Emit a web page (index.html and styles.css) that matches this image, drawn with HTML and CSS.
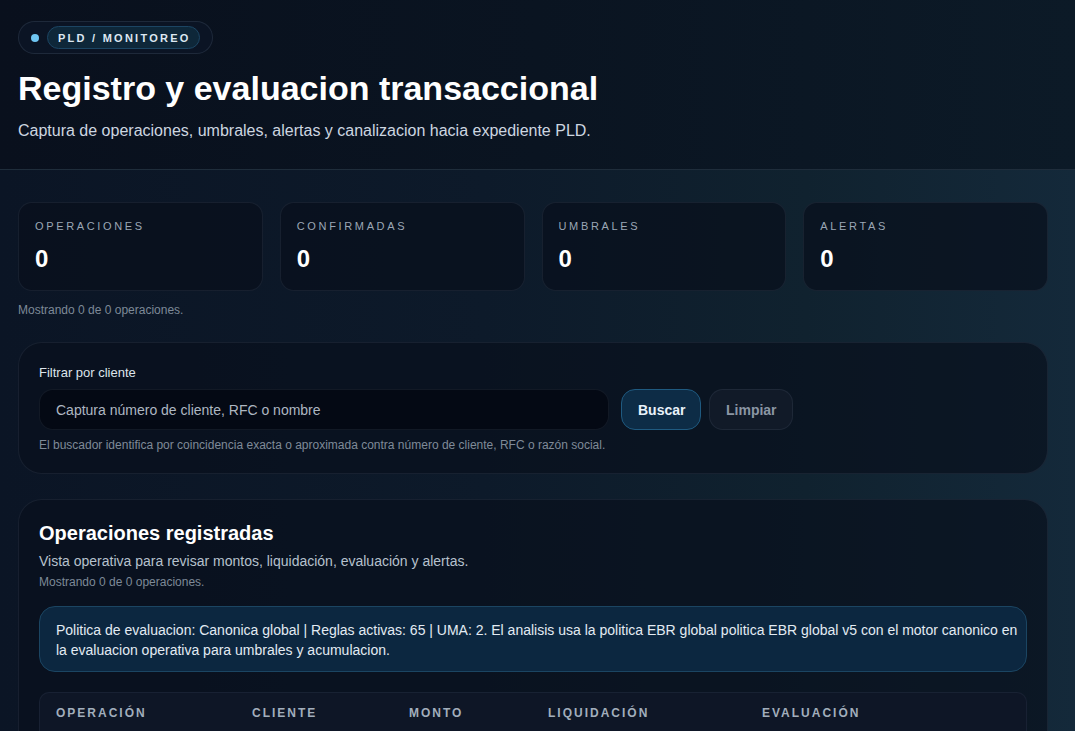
FILE: index.html
```html
<!DOCTYPE html>
<html lang="es">
<head>
<meta charset="utf-8">
<title>Registro y evaluacion transaccional</title>
<link rel="stylesheet" href="styles.css">
</head>
<body>
<header class="hero">
  <div class="hero-inner">
    <div class="chip">
      <span class="chip-dot"></span>
      <span class="chip-label">PLD / MONITOREO</span>
    </div>
    <h1 class="hero-title">Registro y evaluacion transaccional</h1>
    <p class="hero-sub">Captura de operaciones, umbrales, alertas y canalizacion hacia expediente PLD.</p>
  </div>
</header>

<main class="page">
  <section class="stats">
    <div class="stat">
      <div class="stat-label">OPERACIONES</div>
      <div class="stat-value">0</div>
    </div>
    <div class="stat">
      <div class="stat-label">CONFIRMADAS</div>
      <div class="stat-value">0</div>
    </div>
    <div class="stat">
      <div class="stat-label">UMBRALES</div>
      <div class="stat-value">0</div>
    </div>
    <div class="stat">
      <div class="stat-label">ALERTAS</div>
      <div class="stat-value">0</div>
    </div>
  </section>
  <p class="muted-note">Mostrando 0 de 0 operaciones.</p>

  <section class="panel filter">
    <label class="field-label" for="cliente">Filtrar por cliente</label>
    <div class="search-row">
      <input id="cliente" class="search-input" type="text" placeholder="Captura número de cliente, RFC o nombre">
      <div class="btn-group">
        <button class="btn btn-primary" type="button">Buscar</button>
        <button class="btn btn-ghost" type="button">Limpiar</button>
      </div>
    </div>
    <p class="help">El buscador identifica por coincidencia exacta o aproximada contra número de cliente, RFC o razón social.</p>
  </section>

  <section class="panel ops">
    <h2 class="panel-title">Operaciones registradas</h2>
    <p class="panel-sub">Vista operativa para revisar montos, liquidación, evaluación y alertas.</p>
    <p class="muted-note tight">Mostrando 0 de 0 operaciones.</p>

    <div class="policy">Politica de evaluacion: Canonica global | Reglas activas: 65 | UMA: 2. El analisis usa la politica EBR global politica EBR global v5 con el motor canonico en la evaluacion operativa para umbrales y acumulacion.</div>

    <div class="table-wrap">
      <table class="ops-table">
        <colgroup>
          <col class="c-op">
          <col class="c-cli">
          <col class="c-mon">
          <col class="c-liq">
          <col class="c-eval">
        </colgroup>
        <thead>
          <tr>
            <th>OPERACIÓN</th>
            <th>CLIENTE</th>
            <th>MONTO</th>
            <th>LIQUIDACIÓN</th>
            <th>EVALUACIÓN</th>
          </tr>
        </thead>
      </table>
    </div>
  </section>
</main>
</body>
</html>
```

FILE: styles.css
```css
* {
  box-sizing: border-box;
}

html, body {
  margin: 0;
  padding: 0;
}

body {
  font-family: "Liberation Sans", Arial, sans-serif;
  color: #e6edf4;
  background: linear-gradient(90deg, #0b1525 0%, #0d1a2a 45%, #10222f 75%, #14293a 100%);
  min-height: 100vh;
  overflow: hidden;
}

/* ---------- header ---------- */
.hero {
  background: linear-gradient(90deg, #09101d 0%, #0a1421 50%, #0c1a27 100%);
  border-bottom: 1px solid #1f2d3b;
}

.hero-inner {
  padding: 21px 27px 28px 18px;
}

.chip {
  display: inline-flex;
  align-items: center;
  gap: 8px;
  height: 33px;
  padding: 0 12px;
  border: 1px solid rgba(148, 170, 200, 0.14);
  border-radius: 999px;
  background: #0b1424;
}

.chip-dot {
  width: 8px;
  height: 8px;
  border-radius: 50%;
  background: #6fc6f2;
}

.chip-label {
  display: inline-flex;
  align-items: center;
  height: 23px;
  padding: 0 8px 0 10px;
  border: 1px solid #1c4563;
  border-radius: 999px;
  background: #0e2739;
  color: #dde8f2;
  font-size: 11px;
  font-weight: 700;
  letter-spacing: 2.25px;
}

.hero-title {
  margin: 14px 0 0;
  font-size: 34px;
  line-height: 40px;
  font-weight: 700;
  color: #ffffff;
}

.hero-sub {
  margin: 13px 0 0;
  font-size: 16px;
  line-height: 20px;
  color: #cdd6e0;
}

/* ---------- main ---------- */
.page {
  padding: 32px 27px 0 18px;
}

.stats {
  display: grid;
  grid-template-columns: repeat(4, 1fr);
  gap: 17px;
}

.stat {
  height: 89px;
  padding: 16px 16px 18px;
  border: 1px solid rgba(148, 170, 200, 0.1);
  border-radius: 14px;
  background: rgba(8, 15, 28, 0.72);
}

.stat-label {
  font-size: 11px;
  line-height: 14px;
  letter-spacing: 2.65px;
  color: #9ba7b5;
}

.stat-value {
  margin-top: 12px;
  font-size: 24px;
  line-height: 28px;
  font-weight: 700;
  color: #ffffff;
}

.muted-note {
  margin: 12px 0 0;
  font-size: 12px;
  line-height: 15px;
  color: #7d8997;
}

.muted-note.tight {
  margin-top: 5px;
}

/* ---------- panels ---------- */
.panel {
  border: 1px solid rgba(148, 170, 200, 0.1);
  border-radius: 24px;
  background: rgba(8, 15, 28, 0.7);
  padding: 22px 20px 20px;
}

.filter {
  margin-top: 24px;
}

.field-label {
  display: block;
  font-size: 13px;
  line-height: 16px;
  color: #dde4eb;
}

.search-row {
  display: flex;
  align-items: center;
  gap: 12px;
  margin-top: 8px;
}

.search-input {
  width: 570px;
  height: 41px;
  padding: 0 16px;
  border: 1px solid rgba(148, 170, 200, 0.1);
  border-radius: 14px;
  background: #040914;
  color: #e6edf4;
  font-family: "Liberation Sans", Arial, sans-serif;
  font-size: 14px;
  outline: none;
}

.search-input::placeholder {
  color: #aeb7c2;
}

.btn-group {
  display: flex;
  gap: 8px;
}

.btn {
  height: 41px;
  padding: 0 16px;
  border-radius: 14px;
  font-family: "Liberation Sans", Arial, sans-serif;
  font-size: 14px;
  font-weight: 700;
  cursor: pointer;
}

.btn-primary {
  width: 80px;
  border: 1px solid #1f5a80;
  background: #0d2c46;
  color: #e8f2fa;
}

.btn-ghost {
  width: 84px;
  border: 1px solid rgba(148, 170, 200, 0.1);
  background: #111a28;
  color: #8b96a4;
}

.help {
  margin: 8px 0 0;
  font-size: 12px;
  line-height: 15px;
  color: #7f8a98;
}

.ops {
  margin-top: 25px;
  padding-top: 21px;
  height: 260px;
  border-bottom-left-radius: 0;
  border-bottom-right-radius: 0;
}

.panel-title {
  margin: 0;
  font-size: 20px;
  line-height: 24px;
  font-weight: 700;
  color: #ffffff;
}

.panel-sub {
  margin: 7px 0 0;
  font-size: 14px;
  line-height: 18px;
  color: #b6c1cd;
}

.policy {
  margin-top: 16px;
  padding: 13px 8px 11px 16px;
  border: 1px solid #1b4562;
  border-radius: 16px;
  background: #0c2740;
  font-size: 14px;
  line-height: 20px;
  color: #e3ebf3;
}

.table-wrap {
  margin-top: 20px;
  border: 1px solid rgba(148, 170, 200, 0.08);
  border-bottom: none;
  border-radius: 10px 10px 0 0;
  background: #0e1626;
  overflow: hidden;
  height: 60px;
}

.ops-table {
  width: 100%;
  border-collapse: collapse;
  table-layout: fixed;
}

.c-op { width: 196px; }
.c-cli { width: 157px; }
.c-mon { width: 139px; }
.c-liq { width: 214px; }
.c-eval { width: auto; }

.ops-table th {
  padding: 12px 16px 12px;
  text-align: left;
  font-size: 12px;
  line-height: 16px;
  font-weight: 700;
  letter-spacing: 2px;
  color: #a2aebc;
}
```
